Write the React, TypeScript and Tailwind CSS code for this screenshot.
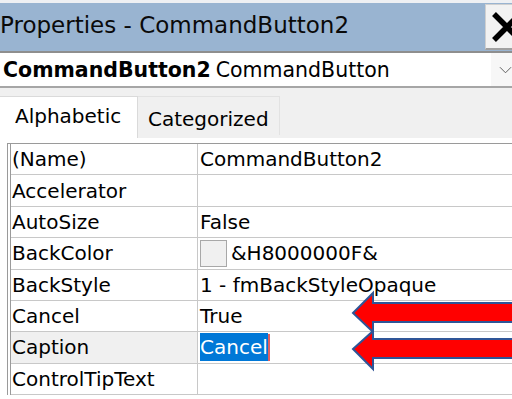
import React from "react";

const rows: { name: string; value: string; kind?: string }[] = [
  { name: "(Name)", value: "CommandButton2" },
  { name: "Accelerator", value: "" },
  { name: "AutoSize", value: "False" },
  { name: "BackColor", value: "&H8000000F&", kind: "color" },
  { name: "BackStyle", value: "1 - fmBackStyleOpaque" },
  { name: "Cancel", value: "True" },
  { name: "Caption", value: "Cancel", kind: "sel" },
  { name: "ControlTipText", value: "" },
];

export default function App() {
  return (
    <div
      className="relative w-[512px] h-[399px] overflow-hidden bg-white text-black"
      style={{ fontFamily: '"DejaVu Sans", "Noto Sans", sans-serif' }}
    >
      {/* Title bar */}
      <div className="h-[53px] border-t-[3px] border-[#eef0f3] bg-[#99b4d1] flex border-b-2 border-b-[#8e8e8e]">
        <div className="flex-1 flex items-start pt-[11px] text-[23px] leading-none text-[#0a0a0a] whitespace-nowrap overflow-hidden">
          Properties - CommandButton2
        </div>
        <div className="w-[27px] mt-[1px] mb-[1px] bg-[#f2f2f2] border-l border-t border-[#d0d0d0] border-b-2 border-b-[#a0a0a0] flex items-center justify-start overflow-hidden">
          <svg width="32" height="32" viewBox="0 0 32 32" className="ml-[5px] shrink-0">
            <path d="M3 3 L29 29 M29 3 L3 29" stroke="#000" strokeWidth="5.5" strokeLinecap="butt" />
          </svg>
        </div>
      </div>
      {/* Object selector */}
      <div className="h-[35px] flex items-center border-b-2 border-[#a6a6a6]">
        <div className="flex-1 flex items-baseline pl-[3px] text-[20.5px] leading-none mt-[2px] whitespace-nowrap">
          <span className="font-bold">CommandButton2</span>
          <span className="ml-[5px]">CommandButton</span>
        </div>
        <div className="w-[21px] h-full bg-[#f7f7f7] flex items-center justify-center">
          <svg width="14" height="10" viewBox="0 0 14 10" className="ml-[8px]">
            <path d="M1 2 L7 8 L13 2" stroke="#555" strokeWidth="1" fill="none" />
          </svg>
        </div>
      </div>
      {/* Tabs */}
      <div className="h-[50px] bg-[#f0f0f0] flex items-end">
        <div className="w-[138px] h-[42px] bg-white border-t border-r border-[#dadada] flex items-start pl-[15px] pt-[9px] text-[20px] leading-none">
          Alphabetic
        </div>
        <div className="w-[142px] h-[39px] mb-[3px] bg-[#f0f0f0] border-t border-r border-[#e2e2e2] flex items-start pl-[10px] pt-[12px] text-[20px] leading-none">
          Categorized
        </div>
      </div>
      {/* Page */}
      <div className="bg-white pl-[7px] pt-[5px]">
        <div className="border-l border-t border-[#9a9a9a]">
          <div className="ml-[2px] border-l border-[#9a9a9a]">
            {rows.map((r) => (
              <div key={r.name} className="flex h-[31.375px] border-b border-[#c8c8c8] text-[20px] leading-none">
                <div
                  className={`w-[187px] shrink-0 border-r border-[#c8c8c8] flex items-center pl-[1px] ${
                    r.kind === "sel" ? "bg-[#f0f0f0]" : ""
                  }`}
                >
                  {r.name}
                </div>
                <div className="flex-1 flex items-center pl-[2px] whitespace-nowrap">
                  {r.kind === "color" ? (
                    <>
                      <span className="w-[27px] h-[27px] bg-[#f0f0f0] border border-[#a8a8a8] mr-[4px]" />
                      <span>{r.value}</span>
                    </>
                  ) : r.kind === "sel" ? (
                    <span className="flex items-center h-[28px]">
                      <span className="bg-[#0078d7] text-white h-[28px] flex items-center">{r.value}</span>
                      <span className="w-[2px] h-[27px] bg-[#e06060]" />
                    </span>
                  ) : (
                    r.value
                  )}
                </div>
              </div>
            ))}
          </div>
        </div>
      </div>
      {/* Arrows */}
      <svg className="absolute left-0 top-0 pointer-events-none" width="512" height="399" viewBox="0 0 512 399">
        <path d="M353 313 L373 293 L373 303 L520 303 L520 322 L373 322 L373 332 Z" fill="#ff0000" stroke="#2f5597" strokeWidth="2" strokeLinejoin="miter" />
        <path d="M353 349 L373 331 L373 339 L520 339 L520 358 L373 358 L373 369 Z" fill="#ff0000" stroke="#2f5597" strokeWidth="2" strokeLinejoin="miter" />
      </svg>
    </div>
  );
}
